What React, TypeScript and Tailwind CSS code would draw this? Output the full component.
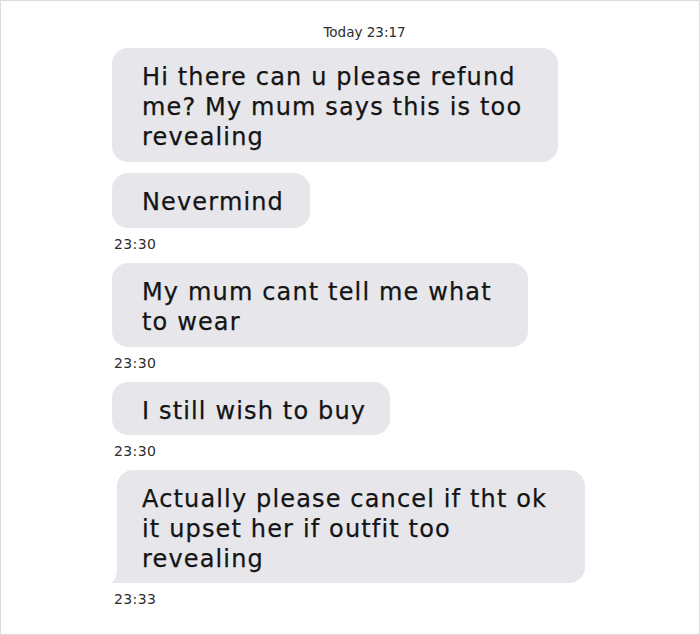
import React from 'react';

type Msg = { lines: string[]; time?: string; box: string; tail?: boolean };

// widths / bottom padding taken per bubble from the screenshot
const messages: Msg[] = [
  { lines: ['Hi there can u please refund', 'me? My mum says this is too', 'revealing'], box: 'w-[446px] pb-[10px]' },
  { lines: ['Nevermind'], time: '23:30', box: 'w-[198px] pb-[11px]' },
  { lines: ['My mum cant tell me what', 'to wear'], time: '23:30', box: 'w-[416px] pb-[10px]' },
  { lines: ['I still wish to buy'], time: '23:30', box: 'w-[278px] pb-[9px]' },
  {
    lines: ['Actually please cancel if tht ok', 'it upset her if outfit too', 'revealing'],
    time: '23:33',
    box: 'w-[468px] pb-[9px]',
    tail: true,
  },
];

const textCls =
  'text-[24px] leading-[30px] tracking-[1.15px] text-[#141414] whitespace-nowrap [-webkit-text-stroke:0.25px_#141414]';

const Bubble = ({ msg }: { msg: Msg }) => {
  if (msg.tail) {
    return (
      <div className="ml-[5px] self-start relative">
        <div className={`bg-[#e6e6eb] rounded-[16px] rounded-bl-none pl-[25px] pt-[14px] ${msg.box} ${textCls}`}>
          {msg.lines.map((l, i) => (
            <div key={i}>{l}</div>
          ))}
        </div>
        <svg className="absolute left-[-6px] bottom-0" width="9" height="14" viewBox="0 0 9 14">
          <path d="M6 0 Q6 10 0 14 L9 14 L9 0 Z" fill="#e6e6eb" />
        </svg>
      </div>
    );
  }
  return (
    <div className={`self-start bg-[#e6e6eb] rounded-[16px] pl-[30px] pt-[14px] ${msg.box} ${textCls}`}>
      {msg.lines.map((l, i) => (
        <div key={i}>{l}</div>
      ))}
    </div>
  );
};

const App = () => {
  return (
    <div
      className="w-[700px] h-[635px] bg-white border border-[#dcdcdc] overflow-hidden"
      style={{ fontFamily: '"DejaVu Sans", sans-serif' }}
    >
      <div className="flex flex-col pl-[111px] pt-[23px]">
        <div className="h-[16px] leading-[16px] text-[13.5px] text-[#2c2c2e] text-center w-[505px] mb-[8px]">
          Today 23:17
        </div>
        {messages.map((m, i) => (
          <React.Fragment key={i}>
            <div className={`flex flex-col ${i === 0 ? '' : 'mt-[11px]'}`}>
              <Bubble msg={m} />
            </div>
            {m.time && (
              <div className="mt-[8px] pl-[2px] h-[16px] leading-[16px] text-[14px] tracking-[0.4px] text-[#2c2c2e]">
                {m.time}
              </div>
            )}
          </React.Fragment>
        ))}
      </div>
    </div>
  );
};

export default App;
